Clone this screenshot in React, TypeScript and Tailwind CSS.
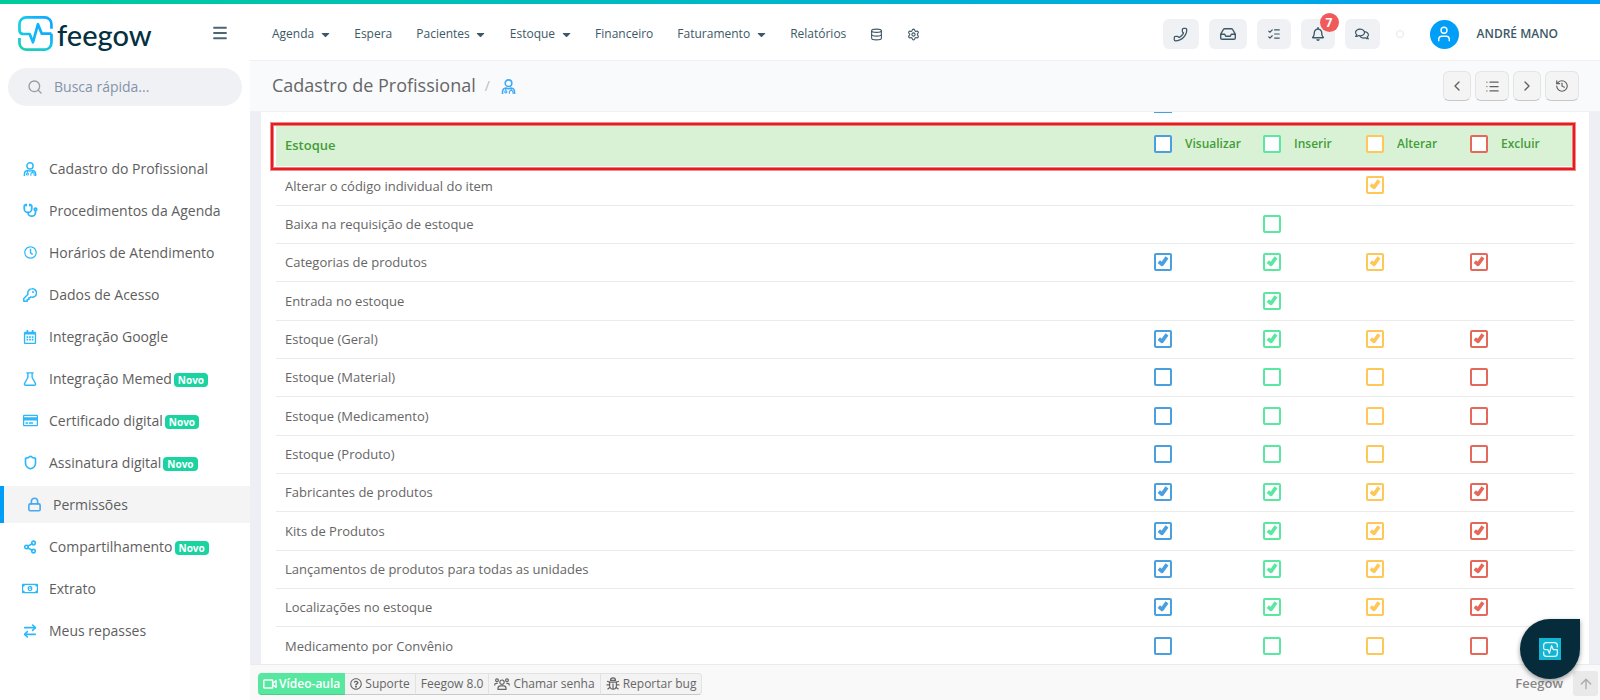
import type { ReactNode } from "react";
import {
  ArrowRightLeft,
  ArrowUp,
  ChevronLeft,
  ChevronRight,
  Database,
  History,
  List,
  ListChecks,
  Lock,
  Menu,
  Phone,
  Search,
  Settings,
  Share2,
  Shield,
  Stethoscope,
  User,
} from "lucide-react";
import { FaCaretDown, FaRegBell, FaRegCalendarAlt, FaRegClock, FaRegComments, FaRegCreditCard, FaRegMoneyBillAlt, FaRegQuestionCircle } from "react-icons/fa";

type Action = "visualizar" | "inserir" | "alterar" | "excluir";

interface Permission {
  name: string;
  // v, i, a, e: "x" is ticked, "o" is open, "-" has no box
  state: string;
}

const actions: { id: Action; label: string; box: string; tick: string; width: string }[] = [
  { id: "visualizar", label: "Visualizar", box: "border-[#4a9fdf]", tick: "text-[#4a9fdf]", width: "w-[109px]" },
  { id: "inserir", label: "Inserir", box: "border-[#5ae8a0]", tick: "text-[#5ae8a0]", width: "w-[103px]" },
  { id: "alterar", label: "Alterar", box: "border-[#fdc857]", tick: "text-[#fdc857]", width: "w-[104px]" },
  { id: "excluir", label: "Excluir", box: "border-[#e5695a]", tick: "text-[#e5695a]", width: "w-[113px]" },
];

const permissions: Permission[] = [
  { name: "Alterar o código individual do item", state: "--x-" },
  { name: "Baixa na requisição de estoque", state: "-o--" },
  { name: "Categorias de produtos", state: "xxxx" },
  { name: "Entrada no estoque", state: "-x--" },
  { name: "Estoque (Geral)", state: "xxxx" },
  { name: "Estoque (Material)", state: "oooo" },
  { name: "Estoque (Medicamento)", state: "oooo" },
  { name: "Estoque (Produto)", state: "oooo" },
  { name: "Fabricantes de produtos", state: "xxxx" },
  { name: "Kits de Produtos", state: "xxxx" },
  { name: "Lançamentos de produtos para todas as unidades", state: "xxxx" },
  { name: "Localizações no estoque", state: "xxxx" },
  { name: "Medicamento por Convênio", state: "oooo" },
];

const sidebarItems: { label: string; icon: ReactNode; isNew?: boolean; active?: boolean }[] = [
  { label: "Cadastro do Profissional", icon: <DoctorIcon className="size-[14px]" /> },
  { label: "Procedimentos da Agenda", icon: <Stethoscope className="size-[15px]" strokeWidth={2.8} /> },
  { label: "Horários de Atendimento", icon: <FaRegClock className="size-[13px]" /> },
  { label: "Dados de Acesso", icon: <KeyIcon /> },
  { label: "Integração Google", icon: <FaRegCalendarAlt className="size-[14px]" /> },
  { label: "Integração Memed", icon: <FlaskIcon />, isNew: true },
  { label: "Certificado digital", icon: <FaRegCreditCard className="size-[15px]" />, isNew: true },
  { label: "Assinatura digital", icon: <Shield className="size-[15px]" strokeWidth={2.6} />, isNew: true },
  { label: "Permissões", icon: <Lock className="size-[15px]" strokeWidth={2.6} />, active: true },
  { label: "Compartilhamento", icon: <Share2 className="size-[14px]" strokeWidth={2.8} />, isNew: true },
  { label: "Extrato", icon: <FaRegMoneyBillAlt className="size-[17px]" /> },
  { label: "Meus repasses", icon: <ArrowRightLeft className="size-4" strokeWidth={2.4} /> },
];

const menu: { label: string; dropdown?: boolean }[] = [
  { label: "Agenda", dropdown: true },
  { label: "Espera" },
  { label: "Pacientes", dropdown: true },
  { label: "Estoque", dropdown: true },
  { label: "Financeiro" },
  { label: "Faturamento", dropdown: true },
  { label: "Relatórios" },
];

function DoctorIcon({ className }: { className?: string }) {
  return (
    <svg viewBox="0 0 14 15" fill="none" stroke="currentColor" strokeWidth="1.6" className={className} aria-hidden="true">
      <circle cx="7" cy="4.2" r="3.3" />
      <path d="M1 15v-1.800c0-2.400 1.400-4 3.400-4.200 1 .5 1.800.7 2.600.7s1.600-.2 2.600-.7c2 .2 3.400 1.800 3.400 4.200V15" />
      <path d="M4.300 9.500v2.200M9.700 9.500v1.700" strokeWidth="1.2" />
      <circle cx="4.3" cy="12.8" r="1.1" strokeWidth="1.1" />
      <path d="M7.900 14.800v-1.500c0-1.200.7-1.900 1.800-1.900s1.800.7 1.800 1.900v1.500" strokeWidth="1.2" />
    </svg>
  );
}

function KeyIcon() {
  return (
    <svg viewBox="0 0 14 14" fill="none" stroke="currentColor" strokeWidth="1.5" strokeLinejoin="round" className="size-[14px]" aria-hidden="true">
      <path d="M9 .8a4.200 4.200 0 0 0-4 5.500L.8 10.500v2.700h3.400v-1.700h1.700V9.800h1L7.800 8.900A4.200 4.200 0 1 0 9 .8z" />
      <circle cx="10" cy="4" r="1" fill="currentColor" stroke="none" />
    </svg>
  );
}

function FlaskIcon() {
  return (
    <svg viewBox="0 0 14 14" fill="none" stroke="currentColor" strokeWidth="1.4" strokeLinejoin="round" className="size-[14px]" aria-hidden="true">
      <path d="M3.300.9h7.400M4.900.9v4.600L1.600 11.400c-.5.900 0 1.800 1 1.800h8.800c1 0 1.500-.9 1-1.800L9.100 5.500V.9" />
    </svg>
  );
}

function InboxIcon() {
  return (
    <svg viewBox="0 0 16 12" fill="none" stroke="currentColor" strokeWidth="1.4" strokeLinejoin="round" className="h-3 w-4" aria-hidden="true">
      <path d="M.7 6.200 3.400 1.500c.3-.5.7-.8 1.300-.8h6.600c.6 0 1 .3 1.300.8l2.700 4.700v3.700c0 .8-.6 1.400-1.400 1.400H2.100c-.8 0-1.400-.6-1.400-1.400z" />
      <path d="M.9 6.200h3.800l1 2h4.600l1-2h3.800" />
    </svg>
  );
}

function VideoIcon() {
  return (
    <svg viewBox="0 0 14 10" fill="none" stroke="currentColor" strokeWidth="1.4" strokeLinejoin="round" className="h-[10px] w-[14px]" aria-hidden="true">
      <rect x=".8" y="1" width="8.8" height="8" rx=".6" />
      <path d="m9.800 4 3.300-2.400v6.800L9.800 6z" />
    </svg>
  );
}

function CrowdIcon() {
  return (
    <svg viewBox="0 0 16 12" fill="none" stroke="currentColor" strokeWidth="1.2" className="h-3 w-4" aria-hidden="true">
      <circle cx="8" cy="4.2" r="2.2" />
      <path d="M4 11.400v-1.200c0-1.500 1-2.400 2.400-2.400h3.200c1.400 0 2.400.9 2.400 2.400v1.200z" />
      <circle cx="3" cy="2.3" r="1.4" />
      <circle cx="13" cy="2.3" r="1.4" />
      <path d="M.7 7.600V7c0-1 .6-1.600 1.600-1.600h1.400M15.300 7.600V7c0-1-.6-1.600-1.600-1.600h-1.400" />
    </svg>
  );
}

function BugIcon() {
  return (
    <svg viewBox="0 0 14 13" fill="none" stroke="currentColor" strokeWidth="1.2" className="h-[13px] w-[14px]" aria-hidden="true">
      <path d="M4.500 3.400a2.500 2.500 0 0 1 5 0z" />
      <path d="M3.600 5.100h6.800v3.600a3.400 3.400 0 0 1-6.800 0zM7 6.500v5.500" />
      <path d="M.5 7.900h3.100M10.400 7.900h3.100M1 4.300l2.600.8M13 4.300l-2.600.8M1.500 12.200l2.600-2M12.500 12.200l-2.600-2" />
    </svg>
  );
}

function PulseMark({ className }: { className?: string }) {
  return (
    <svg viewBox="0 0 36 36" fill="none" strokeWidth="2.8" strokeLinejoin="round" className={className} aria-hidden="true">
      <defs>
        <linearGradient id="pulse-top" x1="0" y1="0" x2="1" y2="0">
          <stop offset="0" stopColor="#16cfe0" />
          <stop offset=".5" stopColor="#10b4fb" />
          <stop offset="1" stopColor="#10a8ff" />
        </linearGradient>
        <linearGradient id="pulse-bottom" x1="0" y1="1" x2="1" y2="0">
          <stop offset="0" stopColor="#1fd0a8" />
          <stop offset=".5" stopColor="#16c6e2" />
          <stop offset="1" stopColor="#10a8ff" />
        </linearGradient>
      </defs>
      <path d="M34.400 13V8.500c0-4-3-7-7-7H8.500c-4 0-7 3-7 7v6c0 2.600 1.300 4 4 4H12l3.400 8.500L20.500 8.500l4 9.700h9.900" stroke="url(#pulse-top)" />
      <path d="M1.500 22.500v5c0 4 3 7 7 7h18.900c4 0 7-3 7-7v-9.300" stroke="url(#pulse-bottom)" />
    </svg>
  );
}

function PermissionBox({ label, checked, box, tick }: { label: string; checked?: boolean; box: string; tick: string }) {
  return (
    <span className="grid size-[18px] place-items-center">
      <input
        type="checkbox"
        aria-label={label}
        defaultChecked={checked}
        className={`peer col-start-1 row-start-1 size-[18px] appearance-none rounded-[2px] border-2 bg-white ${box}`}
      />
      <svg
        viewBox="0 0 12 12"
        fill="none"
        stroke="currentColor"
        strokeWidth="3.6"
        strokeLinejoin="round"
        className={`pointer-events-none invisible col-start-1 row-start-1 size-3 peer-checked:visible ${tick}`}
        aria-hidden="true"
      >
        <path d="m1.800 5.600 3.200 2.800L10 1.400" />
      </svg>
    </span>
  );
}

function Sidebar() {
  return (
    <aside className="flex w-[250px] flex-none flex-col bg-white">
      <div className="flex h-14 items-center justify-between pl-[18px] pr-[21px] pt-[2px]">
        <a href="#" className="flex items-center gap-1">
          <PulseMark className="size-[35px]" />
          <span className="pt-[3px] font-[Lato,sans-serif] text-[29px] font-medium leading-9 text-[#05303f]">feegow</span>
        </a>
        <button type="button" aria-label="Menu" className="text-[#4d6675]">
          <Menu className="size-[18px]" strokeWidth={2.4} />
        </button>
      </div>

      <label className="mx-2 mt-2 flex h-[38px] items-center gap-[11px] rounded-full bg-[#f0f1f5] px-[19px]">
        <Search className="size-4 flex-none text-[#9b9b9b]" />
        <input type="text" aria-label="Busca rápida" placeholder="Busca rápida..." className="w-full min-w-0 bg-transparent text-sm outline-none placeholder:text-[#8493a8]" />
      </label>

      <nav className="mt-11 flex flex-col gap-[5px]">
        {sidebarItems.map((item) => (
          <a
            key={item.label}
            href="#"
            className={`flex h-[37px] items-center pl-[22px] text-sm text-[#5e5e5e] ${item.active ? "border-l-4 border-[#009ef7] bg-[#f4f4f4]" : ""}`}
          >
            <span className={`mr-[11px] flex w-4 flex-none justify-center ${item.active ? "text-[#4aa8ee]" : "text-[#2bb8fb]"}`}>{item.icon}</span>
            {item.label}
            {item.isNew && <span className="ml-[2px] mt-[3px] rounded bg-[#1ad3a0] px-1 text-[10px] font-bold leading-[14px] text-white">Novo</span>}
          </a>
        ))}
      </nav>
    </aside>
  );
}

function TopBar() {
  const tool = "flex h-[30px] items-center justify-center rounded-md bg-[#f0f1f5]";

  return (
    <header className="flex h-[57px] flex-none items-center justify-between border-b border-[#f0f0f2] bg-white pl-[22px] pr-[42px] pt-1 text-[#3d5866]">
      <nav className="flex items-center gap-6 text-xs">
        {menu.map((item) => (
          <a key={item.label} href="#" className="flex items-center gap-[6px]">
            {item.label}
            {item.dropdown && (
              <span className="flex w-[10px] justify-center">
                <FaCaretDown className="size-[13px] flex-none" />
              </span>
            )}
          </a>
        ))}
        <a href="#" aria-label="Dados">
          <Database className="size-[13px]" />
        </a>
        <a href="#" aria-label="Configurações">
          <Settings className="size-[13px]" />
        </a>
      </nav>

      <div className="flex items-center gap-[10px]">
        <button type="button" aria-label="Telefone" className={`${tool} w-9`}>
          <Phone className="size-[15px] -scale-x-100" />
        </button>
        <button type="button" aria-label="Caixa de entrada" className={`${tool} w-[38px]`}>
          <InboxIcon />
        </button>
        <button type="button" aria-label="Tarefas" className={`${tool} w-[34px]`}>
          <ListChecks className="size-[14px]" />
        </button>
        <button type="button" aria-label="Notificações" className={`${tool} relative w-[34px]`}>
          <FaRegBell className="size-[14px]" />
          <span className="absolute -right-1 -top-[6px] flex size-[19px] items-center justify-center rounded-full bg-[#ef5b5b] text-xs font-bold text-white">7</span>
        </button>
        <button type="button" aria-label="Mensagens" className={`${tool} w-[35px]`}>
          <FaRegComments className="size-[14px]" />
        </button>
        <span className="ml-[6px] size-2 rounded-full border border-[#e6e6e6]" />
        <a href="#" className="ml-4 flex items-center gap-[18px] text-xs font-semibold">
          <span className="flex size-[29px] items-center justify-center rounded-full bg-[#009ef7] text-white">
            <User className="size-[18px]" strokeWidth={1.8} />
          </span>
          ANDRÉ MANO
        </a>
      </div>
    </header>
  );
}

function TitleBar() {
  const button = "flex h-[30px] items-center justify-center rounded-md border border-[#e4e4e4] border-b-[#c8c8c8] bg-[#f4f4f4] text-[#606060]";

  return (
    <div className="flex h-[51px] flex-none items-center justify-between border-b border-[#eef0f2] bg-[#f9fafc] pl-[22px] pr-[21px]">
      <div className="flex items-center">
        <h1 className="pb-[2px] text-lg leading-6 text-[#666]">Cadastro de Profissional</h1>
        <span className="ml-[9px] text-sm text-[#bbb]">/</span>
        <DoctorIcon className="ml-[11px] size-[15px] text-[#3fa9f5]" />
      </div>
      <div className="flex gap-1">
        <button type="button" aria-label="Anterior" className={`${button} w-7`}>
          <ChevronLeft className="size-4" />
        </button>
        <button type="button" aria-label="Lista" className={`${button} w-[34px]`}>
          <List className="size-[15px]" />
        </button>
        <button type="button" aria-label="Próximo" className={`${button} w-7`}>
          <ChevronRight className="size-4" />
        </button>
        <button type="button" aria-label="Histórico" className={`${button} w-[34px]`}>
          <History className="size-[14px]" />
        </button>
      </div>
    </div>
  );
}

function PermissionsTable() {
  return (
    <div className="relative">
      <table className="w-full table-fixed border-collapse text-[13px] text-[#666]">
        <thead>
          <tr className="h-10 bg-[#d9f2d6] text-left text-[#449d36]">
            <th className="px-[9px] pb-px font-semibold">Estoque</th>
            {actions.map((action) => (
              <th key={action.id} className={`px-[9px] pb-[5px] text-xs font-semibold ${action.width}`}>
                <label className="flex items-center gap-[13px]">
                  <PermissionBox label={`Estoque: ${action.label}`} box={action.box} tick={action.tick} />
                  {action.label}
                </label>
              </th>
            ))}
          </tr>
        </thead>
        <tbody>
          {permissions.map((permission) => (
            <tr key={permission.name} className="h-[38px] border-b border-[#eaeaea] [&:nth-child(3n+1)]:h-[39px]">
              <td className="px-[9px] pt-[2px]">{permission.name}</td>
              {actions.map((action, i) => (
                <td key={action.id} className="px-[9px]">
                  {permission.state[i] !== "-" && (
                    <PermissionBox
                      label={`${permission.name}: ${action.label}`}
                      checked={permission.state[i] === "x"}
                      box={action.box}
                      tick={action.tick}
                    />
                  )}
                </td>
              ))}
            </tr>
          ))}
        </tbody>
      </table>
      <div className="pointer-events-none absolute -left-[5px] -right-px -top-[3px] h-[47px] border-2 border-[#e81c1c] shadow-[0_0_0_1px_#f08c8c,inset_0_0_0_1px_#e88080]" />
    </div>
  );
}

function FooterBar() {
  const item = "flex h-[22px] items-center gap-[3px] border-y border-r border-[#e2e2e2] border-b-[#c9c9c9] bg-[#f3f3f3] px-[5px]";

  return (
    <footer className="flex h-9 flex-none items-center justify-between border-t border-[#ebebeb] bg-[#f9f9f9] pl-2 pr-[2px] pt-[2px] text-xs text-[#666]">
      <div className="flex">
        <button type="button" className="flex h-[22px] items-center gap-[2px] rounded-l border-y border-t-[#57e8a0] border-b-[#45cf88] bg-[#57e8a0] px-[5px] font-semibold text-white">
          <VideoIcon />
          Vídeo-aula
        </button>
        <button type="button" className={item}>
          <FaRegQuestionCircle className="size-3" />
          Suporte
        </button>
        <button type="button" className={item}>
          Feegow 8.0
        </button>
        <button type="button" className={item}>
          <CrowdIcon />
          Chamar senha
        </button>
        <button type="button" className={`${item} rounded-r`}>
          <BugIcon />
          Reportar bug
        </button>
      </div>
      <div className="flex items-center gap-[10px]">
        <span className="text-[13px] font-semibold text-[#888]">Feegow</span>
        <button type="button" aria-label="Voltar ao topo" className="flex size-[25px] items-center justify-center rounded-[3px] bg-[#e9e9e9] text-[#aaa]">
          <ArrowUp className="size-4" />
        </button>
      </div>
    </footer>
  );
}

export default function App() {
  return (
    <div className="flex h-screen flex-col overflow-hidden bg-[#eeeff4] font-['Open_Sans',sans-serif]">
      <div className="h-1 flex-none bg-gradient-to-r from-[#00cc9b] via-[#00b5cb] to-[#009ef7]" />
      <div className="flex min-h-0 flex-1">
        <Sidebar />
        <div className="flex min-w-0 flex-1 flex-col">
          <TopBar />
          <TitleBar />
          <main className="min-h-0 flex-1 overflow-y-auto pl-[11px] pr-[11px] [scrollbar-width:none]">
            <div className="min-h-full bg-white pl-[15px] pr-[15px]">
              <div className="flex h-[14px] justify-end">
                <div className="mr-[402px] h-px w-[18px] bg-[#4a9fdf]" />
              </div>
              <PermissionsTable />
            </div>
          </main>
          <FooterBar />
        </div>
      </div>

      <button
        type="button"
        aria-label="Assistente Feegow"
        className="fixed bottom-[21px] right-5 flex size-[60px] items-center justify-center rounded-full rounded-tr-lg bg-[#062b3a] shadow-[0_2px_5px_rgba(0,0,0,0.4)]"
      >
        <span className="flex size-[22px] items-center justify-center bg-[#13b5d2]">
          <svg viewBox="0 0 36 36" fill="none" stroke="#e4fbff" strokeWidth="3" strokeLinejoin="round" className="size-[15px]" aria-hidden="true">
            <path d="M34.400 13V8.500c0-4-3-7-7-7H8.500c-4 0-7 3-7 7v6c0 2.600 1.300 4 4 4H12l3.400 8.500L20.500 8.500l4 9.700h9.900" />
            <path d="M1.500 22.500v5c0 4 3 7 7 7h18.900c4 0 7-3 7-7v-9.300" />
          </svg>
        </span>
      </button>
    </div>
  );
}
